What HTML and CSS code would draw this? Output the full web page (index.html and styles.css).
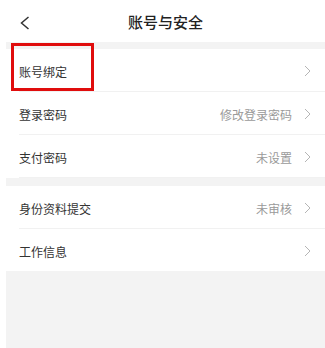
FILE: index.html
```html
<!DOCTYPE html>
<html lang="zh-CN">
<head>
    <meta charset="UTF-8">
    <title>账号与安全</title>
    <link rel="stylesheet" href="styles.css">
</head>
<body>

<div class="page">
    <div class="header">
        <a href="" class="back">
            <svg width="10" height="14" viewBox="0 0 10 14">
                <polyline points="8.5,1 1.5,7 8.5,13" fill="none" stroke="#333" stroke-width="1.5"/>
            </svg>
        </a>
        <span class="title">账号与安全</span>
    </div>

    <div class="group">
        <div class="row">
            <span class="label">账号绑定</span>
            <span class="value"></span>
            <svg class="arrow" width="7" height="12" viewBox="0 0 7 12"><polyline points="1,1 6,6 1,11" fill="none" stroke="#b5b5b5" stroke-width="1"/></svg>
        </div>
        <div class="row">
            <span class="label">登录密码</span>
            <span class="value">修改登录密码</span>
            <svg class="arrow" width="7" height="12" viewBox="0 0 7 12"><polyline points="1,1 6,6 1,11" fill="none" stroke="#b5b5b5" stroke-width="1"/></svg>
        </div>
        <div class="row">
            <span class="label">支付密码</span>
            <span class="value">未设置</span>
            <svg class="arrow" width="7" height="12" viewBox="0 0 7 12"><polyline points="1,1 6,6 1,11" fill="none" stroke="#b5b5b5" stroke-width="1"/></svg>
        </div>
        <div class="mark"></div>
    </div>

    <div class="group">
        <div class="row">
            <span class="label">身份资料提交</span>
            <span class="value">未审核</span>
            <svg class="arrow" width="7" height="12" viewBox="0 0 7 12"><polyline points="1,1 6,6 1,11" fill="none" stroke="#b5b5b5" stroke-width="1"/></svg>
        </div>
        <div class="row">
            <span class="label">工作信息</span>
            <span class="value"></span>
            <svg class="arrow" width="7" height="12" viewBox="0 0 7 12"><polyline points="1,1 6,6 1,11" fill="none" stroke="#b5b5b5" stroke-width="1"/></svg>
        </div>
    </div>
</div>

</body>
</html>
```

FILE: styles.css
```css
html, body, div, span {
    margin: 0;
    padding: 0;
}
html, body {
    width: 100%;
    height: 100%;
    background-color: #fff;
}
body {
    font-family: "Noto Sans CJK SC", "Noto Sans", sans-serif;
}
a {
    text-decoration: none;
}
.page {
    margin-left: 6px;
    height: 100%;
    background-color: #f3f3f3;
    display: flex;
    flex-direction: column;
}
.header {
    height: 42px;
    background-color: #fff;
    display: flex;
    align-items: center;
    justify-content: center;
    position: relative;
}
.back {
    position: absolute;
    left: 14px;
    top: 16px;
    width: 10px;
    height: 14px;
    display: flex;
}
.title {
    font-size: 15px;
    font-weight: 500;
    color: #222;
}
.group {
    margin-top: 7px;
    background-color: #fff;
    position: relative;
}
.group + .group {
    margin-top: 8px;
}
.row {
    height: 43px;
    margin-left: 13px;
    padding-right: 14px;
    padding-top: 2px;
    box-sizing: border-box;
    display: flex;
    align-items: center;
    border-bottom: 1px solid #f1f1f1;
}
.row:last-of-type {
    border-bottom: none;
    height: 42px;
}
.label {
    flex: 1;
    font-size: 12px;
    color: #333;
}
.value {
    font-size: 12px;
    color: #9a9a9a;
    margin-right: 12px;
}
.arrow {
    display: block;
}
.mark {
    position: absolute;
    left: 5px;
    top: -6px;
    width: 77px;
    height: 42px;
    border: 3px solid #e00d0d;
}
```
